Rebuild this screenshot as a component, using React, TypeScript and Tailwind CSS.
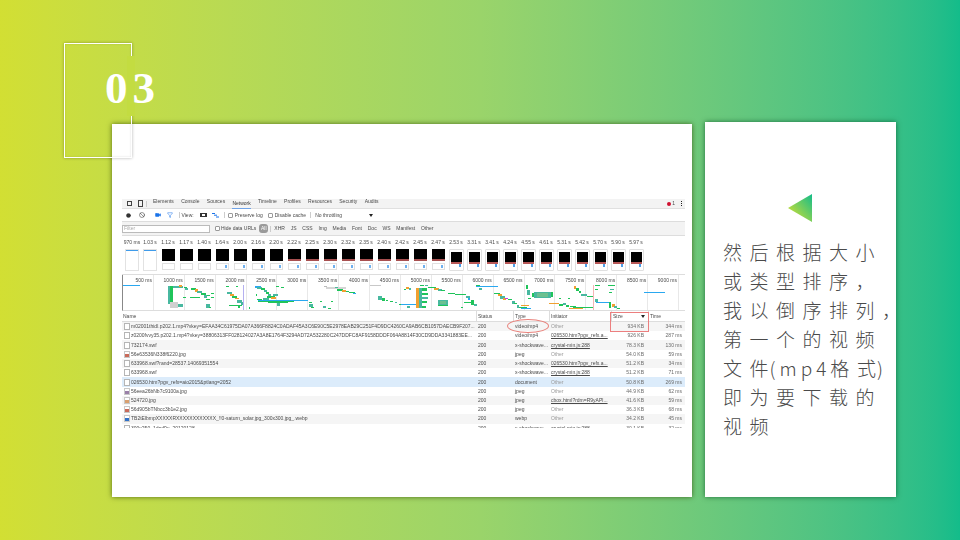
import { Ban, Circle, Filter, Video } from "lucide-react";

const FILM = [
  "970 ms", "1.03 s", "1.12 s", "1.17 s", "1.40 s", "1.64 s", "2.00 s", "2.16 s", "2.20 s", "2.22 s",
  "2.25 s", "2.30 s", "2.32 s", "2.35 s", "2.40 s", "2.42 s", "2.45 s", "2.47 s", "2.53 s", "3.31 s",
  "3.41 s", "4.24 s", "4.55 s", "4.61 s", "5.31 s", "5.42 s", "5.70 s", "5.90 s", "5.97 s",
];

const TICKS = [
  "500 ms", "1000 ms", "1500 ms", "2000 ms", "2500 ms", "3000 ms", "3500 ms", "4000 ms", "4500 ms",
  "5000 ms", "5500 ms", "6000 ms", "6500 ms", "7000 ms", "7500 ms", "8000 ms", "8500 ms", "9000 ms",
];

const TABS = ["Elements", "Console", "Sources", "Network", "Timeline", "Profiles", "Resources", "Security", "Audits"];
const TYPES = ["XHR", "JS", "CSS", "Img", "Media", "Font", "Doc", "WS", "Manifest", "Other"];

type Row = { name: string; type: string; init: string; link?: boolean; size: string; time: string; icon: string };

const ROWS: Row[] = [
  { name: "m02001thidl.p202.1.mp4?vkey=EFAA34C61975DA07A366F8824C0ADAF45A3C6E90C5E2978EAB29C251F4D9DC4260CA9AB6CB1057DAECB9F207...", type: "video/mp4", init: "Other", size: "934 KB", time: "344 ms", icon: "doc" },
  { name: "z0200fvvy35.p202.1.mp4?vkey=38806313FF028124027A3A8E1764F3294AD72A532280C247DDFC8AF9158DDDF064A8814F30CD9DDA3341883EE...", type: "video/mp4", init: "026530.htm?pgv_refx.a...", link: true, size: "926 KB", time: "287 ms", icon: "doc" },
  { name: "732174.swf", type: "x-shockwave...", init: "crystal-min.js:288", link: true, size: "78.3 KB", time: "130 ms", icon: "doc" },
  { name: "56e63536N338f6220.jpg", type: "jpeg", init: "Other", size: "54.0 KB", time: "59 ms", icon: "red" },
  { name: "633968.swf?rand=28537.14069351554", type: "x-shockwave...", init: "026530.htm?pgv_refx.a...", link: true, size: "51.2 KB", time: "34 ms", icon: "doc" },
  { name: "633968.swf", type: "x-shockwave...", init: "crystal-min.js:288", link: true, size: "51.2 KB", time: "71 ms", icon: "doc" },
  { name: "026530.htm?pgv_refx=aio2015&ptlang=2052", type: "document", init: "Other", size: "50.8 KB", time: "269 ms", icon: "doc" },
  { name: "56eea26bNb7c9100a.jpg", type: "jpeg", init: "Other", size: "44.9 KB", time: "62 ms", icon: "violet" },
  { name: "524720.jpg", type: "jpeg", init: "cbox.html?rdm=R9yAPl...", link: true, size: "41.6 KB", time: "59 ms", icon: "orange" },
  { name: "56d905bTNbcc3b1e2.jpg", type: "jpeg", init: "Other", size: "36.3 KB", time: "68 ms", icon: "red" },
  { name: "TB2tElbmpXXXXXRXXXXXXXXXXXX_!!0-saturn_solar.jpg_300x300.jpg_.webp", type: "webp", init: "Other", size: "34.2 KB", time: "45 ms", icon: "blue" },
  { name: "300x250_1dpd9u_20120128", type: "x-shockwave...", init: "crystal-min.js:288", link: true, size: "30.1 KB", time: "32 ms", icon: "doc" },
];

// overview bars: x, y, width, height, colour (relative to the overview strip)
const G = "#1fc45a";
const B = "#2aa8f0";
const O = "#f0a030";
const T = "#48b8a0";
const L = "#6cc090";
const BARS: [number, number, number, number, string][] = [
  [0, 10, 17, 1, B],
  [45, 11, 2, 18, T], [47, 11, 3, 18, G], [47, 27, 8, 6, "#cfcfcf"], [50, 11, 10, 2, T], [56, 10, 3, 2, O],
  [55, 29, 5, 3, T], [61, 12, 3, 1, G], [60, 22, 3, 1, G], [62, 13, 3, 2, T],
  [68, 13, 5, 2, G], [72, 14, 3, 3, O], [74, 16, 5, 2, T], [78, 18, 5, 2, G], [81, 20, 3, 3, T], [84, 20, 3, 1, G],
  [67, 22, 10, 1, G], [83, 24, 4, 1, G], [88, 18, 3, 1, G], [88, 22, 3, 1, G], [83, 29, 4, 4, T], [86, 32, 2, 1, G],
  [103, 11, 3, 1, G], [113, 11, 2, 1, G], [104, 17, 5, 2, T], [107, 19, 4, 2, O], [109, 21, 5, 2, G], [112, 23, 4, 1, O],
  [114, 25, 5, 3, T], [106, 30, 13, 1, G], [118, 27, 2, 3, T], [115, 31, 2, 2, G], [126, 32, 1, 2, G], [120, 10, 1, 25, "#b5b0f0"],
  [132, 11, 6, 2, B], [134, 12, 5, 2, T], [138, 13, 4, 2, G], [141, 15, 3, 2, T], [143, 17, 3, 2, G], [145, 19, 3, 3, T],
  [144, 21, 8, 2, G], [148, 22, 5, 2, O], [150, 19, 5, 2, T], [153, 11, 3, 1, G], [158, 12, 3, 1, G], [133, 19, 1, 2, G],
  [134, 24, 5, 1, G], [140, 23, 6, 2, T], [135, 25, 50, 1, B], [135, 26, 36, 1, G], [145, 27, 20, 1, G], [154, 28, 3, 3, T],
  [186, 27, 3, 1, G], [186, 29, 4, 3, T], [188, 32, 3, 1, G], [197, 26, 2, 1, G], [208, 26, 2, 1, G], [200, 31, 3, 2, T], [205, 33, 3, 1, G],
  [201, 11, 3, 1, "#bbbbbb"], [203, 12, 20, 2, "#d5d5d5"], [212, 12, 3, 1, T], [214, 14, 6, 2, G], [219, 15, 4, 2, O], [223, 16, 3, 1, G], [226, 17, 6, 1, G], [230, 18, 3, 1, B],
  [247, 10, 11, 1, "#c8c8c8"], [255, 21, 4, 4, T], [259, 23, 3, 3, G], [263, 25, 2, 1, G], [267, 26, 3, 1, G], [272, 27, 2, 1, T], [276, 29, 2, 1, G],
  [283, 12, 3, 2, O], [281, 14, 2, 1, G], [286, 13, 2, 2, T], [278, 29, 15, 1, B], [284, 31, 3, 2, T],
  [293, 13, 3, 20, O], [296, 13, 3, 20, T], [299, 13, 5, 3, G], [299, 18, 6, 2, G], [299, 22, 6, 2, T], [299, 26, 5, 2, G], [299, 31, 4, 2, G], [297, 10, 4, 1, G], [302, 10, 3, 1, T], [305, 12, 8, 1, G],
  [311, 13, 5, 2, O], [315, 14, 4, 2, T], [318, 15, 4, 1, G], [325, 18, 7, 1, G], [332, 19, 11, 1, G], [343, 21, 4, 2, T], [345, 23, 2, 2, B],
  [315, 25, 10, 5, T], [317, 26, 6, 3, L], [315, 30, 10, 1, G], [338, 32, 2, 1, G], [341, 27, 8, 1, G], [348, 25, 3, 5, G], [351, 29, 3, 2, T],
  [353, 10, 4, 2, G], [353, 11, 22, 1, B], [356, 13, 3, 2, T],
  [371, 18, 6, 1, G], [375, 19, 4, 2, O], [377, 21, 5, 3, T], [380, 23, 3, 2, O], [382, 23, 3, 1, "#c040e0"], [385, 24, 4, 1, G], [389, 26, 3, 3, T], [391, 28, 3, 1, G], [394, 30, 2, 3, T], [396, 32, 8, 1, G], [398, 33, 10, 1, B], [398, 30, 8, 1, O],
  [403, 10, 2, 4, G], [404, 15, 3, 5, T], [409, 18, 2, 4, G], [411, 17, 17, 6, T], [414, 18, 11, 4, L], [428, 17, 2, 5, G], [405, 23, 3, 1, G],
  [426, 28, 10, 1, O], [436, 29, 4, 2, G], [440, 28, 3, 2, T], [443, 30, 3, 2, G], [447, 31, 6, 1, G], [450, 32, 20, 1, G], [446, 33, 14, 1, O],
  [451, 11, 2, 3, O], [453, 13, 3, 3, G], [456, 16, 2, 2, G], [458, 19, 6, 2, T], [464, 21, 6, 1, G], [436, 23, 2, 1, G], [445, 23, 2, 1, G],
  [472, 10, 5, 1, G], [472, 14, 3, 1, G], [472, 24, 3, 3, T], [473, 27, 15, 1, B], [486, 27, 2, 6, G], [489, 29, 3, 3, O], [491, 31, 3, 2, T], [494, 33, 3, 1, G],
  [485, 10, 7, 1, G], [487, 14, 4, 1, T], [486, 17, 3, 1, G], [521, 17, 21, 1, B],
];

function Thumb({ index }: { index: number }) {
  // first two frames are an empty page
  if (index < 2) {
    return (
      <div className="w-[14px] h-[22px] bg-white border border-[#e2e2e2] flex flex-col">
        <div className="h-[1px] bg-[#3f9bea]" />
      </div>
    );
  }
  if (index < 18) {
    return (
      <div className="w-[13px] h-[22px] bg-white flex flex-col">
        <div className="h-[12px] bg-black flex flex-col justify-end">
          {index > 8 && <div className="h-[2px] bg-[#a85050]" />}
        </div>
        <div className="mt-[2px] h-[7px] border border-[#e0e0e0] flex items-end justify-end pr-[1px] pb-[1px]">
          {index > 4 && <div className="w-[2px] h-[3px] bg-[#6fb0ee]" />}
        </div>
      </div>
    );
  }
  return (
    <div className="w-[15px] h-[22px] bg-white border border-[#e0e0e0] rounded-[1px] px-[1px] pt-[2px] flex flex-col">
      <div className="h-[10px] bg-black" />
      <div className="h-[2px] bg-[#b85858]" />
      <div className="h-[3px] flex justify-end pr-[1px]">
        <div className="h-[3px] w-[2px] bg-[#4c9ee8]" />
      </div>
    </div>
  );
}

function Tick() {
  return <span className="w-[5px] h-[5px] border border-[#9a9a9a] rounded-[1px] shrink-0 bg-white" />;
}

function RowIcon({ icon }: { icon: string }) {
  if (icon === "doc") return <span className="w-[6px] h-[7px] border border-[#b5b5b5] bg-white shrink-0" />;
  const colors: Record<string, string> = {
    red: "bg-[#c96a5a]",
    violet: "bg-[#9a80a8]",
    orange: "bg-[#d9a070]",
    blue: "bg-[#2f70c8]",
  };
  return (
    <span className="w-[6px] h-[7px] border border-[#c8c8c8] bg-white shrink-0 flex items-end">
      <span className={`w-full h-[3px] ${colors[icon]}`} />
    </span>
  );
}

function DevTools() {
  return (
    <div className="w-[563px] h-[229px] overflow-hidden bg-white text-[5px] leading-none text-[#4a4a4a] font-['Liberation_Sans',sans-serif] blur-[0.3px]">
      {/* tabs */}
      <div className="h-[10px] bg-[#f3f3f3] border-b border-[#e0e0e0] flex items-center pl-[5px] pr-[2px]">
        <span className="w-[5px] h-[5px] border border-[#444] mr-[6px]" />
        <span className="w-[5px] h-[7px] border border-[#444] mr-[3px]" />
        <span className="w-px h-[6px] bg-[#ccc] mr-[6px]" />
        <div className="flex gap-[7.3px]">
          {TABS.map((t) => (
            <span key={t} className={t === "Network" ? "text-[#333] border-b border-[#6fa3e8] h-[10px] flex items-center" : ""}>{t}</span>
          ))}
        </div>
        <span className="ml-auto w-[4px] h-[4px] rounded-full bg-[#d01030]" />
        <span className="ml-[1px] mr-[6px]">1</span>
        <span className="flex flex-col gap-[1px] mr-[1px]">
          <span className="w-[1px] h-[1px] bg-[#222]" />
          <span className="w-[1px] h-[1px] bg-[#222]" />
          <span className="w-[1px] h-[1px] bg-[#222]" />
        </span>
      </div>
      {/* controls */}
      <div className="h-[13px] bg-white border-b border-[#ddd] flex items-center pl-[4px]">
        <Circle size={5} className="text-[#333] fill-[#333] mr-[7.5px]" />
        <Ban size={6} className="text-[#333] mr-[10px]" />
        <Video size={6} className="text-[#1a73e8] fill-[#1a73e8] mr-[6px]" />
        <Filter size={6} className="text-[#1a73e8] mr-[6px]" />
        <span className="w-px h-[6px] bg-[#ccc] mr-[2px]" />
        <span className="mr-[6px]">View:</span>
        <span className="w-[7px] h-[4px] border-y border-x-2 border-[#333] mr-[5px]" />
        <svg width="7" height="5" viewBox="0 0 7 5" className="mr-[5px]">
          <path d="M0 0.5 H3 M2 2.2 H5 M4 4 H7" stroke="#1a73e8" strokeWidth="1" />
        </svg>
        <span className="w-px h-[6px] bg-[#ccc] mr-[3px]" />
        <Tick />
        <span className="ml-[2px] mr-[5px]">Preserve log</span>
        <Tick />
        <span className="ml-[2px] mr-[4px]">Disable cache</span>
        <span className="w-px h-[6px] bg-[#ccc] mr-[4px]" />
        <span>No throttling</span>
        <span className="ml-[27px] w-0 h-0 border-x-[2px] border-x-transparent border-t-[3px] border-t-[#222]" />
      </div>
      {/* filter */}
      <div className="h-[14px] bg-[#f3f3f3] border-b border-[#ddd] flex items-center">
        <div className="w-[88px] h-[8px] bg-white border border-[#bbb] text-[#aaa] flex items-center pl-[1px] mr-[5px]">Filter</div>
        <Tick />
        <span className="ml-[1px] mr-[3px]">Hide data URLs</span>
        <span className="w-[9px] h-[9px] rounded-[3px] bg-[#9a9a9a] text-white flex items-center justify-center mr-[2px]">All</span>
        <span className="w-px h-[6px] bg-[#ccc] mr-[3px]" />
        <div className="flex gap-[5.8px]">
          {TYPES.map((t) => (
            <span key={t}>{t}</span>
          ))}
        </div>
      </div>
      {/* film strip */}
      <div className="h-[39px] pl-[1px] pt-[4px] border-b border-[#ddd] grid grid-cols-[repeat(29,18px)] justify-start">
        {FILM.map((f, i) => (
          <div key={f} className="flex flex-col items-center gap-[4px]">
            <span className="whitespace-nowrap">{f}</span>
            <Thumb index={i} />
          </div>
        ))}
      </div>
      {/* overview */}
      <div className="relative h-[36px] border-b border-[#ddd] border-l border-l-[#888] grid grid-cols-[repeat(18,30.9px)] justify-start">
        {TICKS.map((t) => (
          <div key={t} className="border-r border-[#e8e8e8] text-right pr-[1px] pt-[3px] whitespace-nowrap">{t}</div>
        ))}
        <svg width="563" height="36" className="absolute left-0 top-0">
          {BARS.map(([x, y, w, h, c], i) => (
            <rect key={i} x={x} y={y} width={w} height={h} fill={c} />
          ))}
          <rect x="470" y="10" width="1" height="25" fill="#f5b5b5" />
        </svg>
      </div>
      {/* table */}
      <div className="grid grid-cols-[354px_37px_36px_62px_37px_37px] h-[11px] items-stretch border-b border-[#ddd]">
        {["Name", "Status", "Type", "Initiator", "Size", "Time"].map((h, i) => (
          <div key={h} className={`flex items-center justify-between px-[1px] ${i > 0 ? "border-l border-[#ddd]" : ""}`}>
            {h}
            {h === "Size" && <span className="mr-[2px] w-0 h-0 border-x-[2px] border-x-transparent border-t-[3px] border-t-[#222]" />}
          </div>
        ))}
      </div>
      {ROWS.map((r, i) => (
        <div
          key={r.name}
          className={`grid grid-cols-[354px_37px_36px_62px_37px_37px] h-[9.24px] items-center ${i === 6 ? "bg-[#dcecfb]" : i % 2 === 0 ? "bg-[#f5f5f5]" : "bg-white"}`}
        >
          <div className="flex items-center gap-[1px] pl-[2px] overflow-hidden whitespace-nowrap">
            <RowIcon icon={r.icon} />
            <span>{r.name}</span>
          </div>
          <span className="pl-[2px]">200</span>
          <span className="pl-[2px] whitespace-nowrap">{r.type}</span>
          <span className={`pl-[2px] whitespace-nowrap ${r.link ? "underline" : "text-[#999]"}`}>{r.init}</span>
          <span className="pr-[4px] text-right text-[#6a6a6a]">{r.size}</span>
          <span className="pr-[3px] text-right text-[#6a6a6a]">{r.time}</span>
        </div>
      ))}
    </div>
  );
}

export default function App() {
  return (
    <div className="relative w-[960px] h-[540px] overflow-hidden bg-gradient-to-r from-[#d2df33] via-[#9ad46a] to-[#13bc8a]">
      <div className="flex pl-[112px] pt-[122px] gap-[13px]">
        {/* screenshot card */}
        <div className="relative w-[580px] h-[373px] mt-[2px] bg-white pl-[10px] pt-[75px] shadow-[0_0_5px_rgba(50,70,0,0.75)]">
          <DevTools />
          {/* annotations drawn over the screenshot */}
          <div className="absolute left-[395px] top-[195px] w-[42px] h-[14px] rounded-[50%] border border-[#e8807a]" />
          <div className="absolute left-[498px] top-[188px] w-[39px] h-[20px] border border-[#ec7f7f]" />
        </div>
        {/* caption card */}
        <div className="w-[191px] h-[375px] bg-white flex flex-col items-start shadow-[0_0_5px_rgba(0,70,30,0.7)]">
          <svg width="24" height="28" viewBox="0 0 24 28" className="ml-[83px] mt-[72px]">
            <defs>
              <linearGradient id="tri" x1="1" y1="0" x2="0" y2="1">
                <stop offset="0" stopColor="#13bc8a" />
                <stop offset="0.9" stopColor="#d2df33" />
              </linearGradient>
            </defs>
            <polygon points="24,0 0,14 24,28" fill="url(#tri)" />
          </svg>
          <div className="ml-[18px] mt-[15px] text-[19px] leading-[29px] tracking-[7.5px] text-[#4a4a4a] whitespace-nowrap font-['Noto_Sans_CJK_SC',sans-serif] font-light">
            <div>然后根据大小</div>
            <div>或类型排序，</div>
            <div>我以倒序排列，</div>
            <div>第一个的视频</div>
            <div>
              文<span className="tracking-[1px]">件</span>
              <span className="tracking-[4px]">(mp4</span>格<span className="tracking-[1px]">式</span>)
            </div>
            <div>即为要下载的</div>
            <div>视频</div>
          </div>
        </div>
      </div>
      {/* section number frame, overlapping the card */}
      <div className="absolute left-[64px] top-[43px] w-[68px] h-[115px] border-[1.5px] border-white shadow-[0_0_3px_rgba(0,0,0,0.3),inset_0_0_2px_rgba(0,0,0,0.15)]" />
      <div className="absolute left-[127px] top-[56px] w-[8px] h-[60px] bg-[#c3dc41]" />
      <div className="absolute left-[105px] top-[61px] text-[45px] leading-[55px] font-bold tracking-[5px] text-white font-['Liberation_Serif',serif]">03</div>
    </div>
  );
}
